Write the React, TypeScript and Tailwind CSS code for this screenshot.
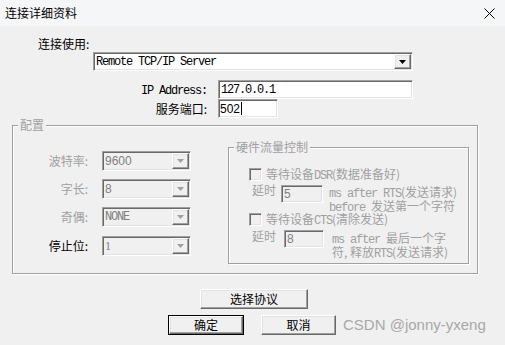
import React from 'react'

const cjk = "font-['Noto_Sans_CJK_SC',sans-serif]"
const mono = "font-['Liberation_Mono','Noto_Sans_CJK_SC',monospace] text-[12px] tracking-[-1.2px]"

// classic win32 3D edges
const sunken =
  'border border-t-[#a0a0a0] border-l-[#a0a0a0] border-r-white border-b-white shadow-[inset_1px_1px_0_#696969,inset_-1px_-1px_0_#e3e3e3]'
const raised =
  'border border-t-white border-l-white border-r-[#696969] border-b-[#696969] shadow-[inset_-1px_-1px_0_#a0a0a0,inset_1px_1px_0_#e3e3e3]'

function Arrow({ disabled }: { disabled?: boolean }) {
  return (
    <svg width="7" height="4" viewBox="0 0 7 4">
      <polygon points="0,0 7,0 3.5,4" fill={disabled ? '#a0a0a0' : '#000'} />
    </svg>
  )
}

function Combo({ w, h, disabled, children }: { w: string; h: string; disabled?: boolean; children: React.ReactNode }) {
  return (
    <div className={`${sunken} ${w} ${h} flex p-[1px] ${disabled ? 'bg-[#f0f0f0]' : 'bg-white'}`}>
      <div className={`flex-1 flex items-center pl-[1px] ${disabled ? 'text-[#808080]' : 'text-black'}`}>{children}</div>
      <div className={`${raised} w-[17px] bg-[#f0f0f0] flex items-center justify-center`}>
        <Arrow disabled={disabled} />
      </div>
    </div>
  )
}

function Check() {
  return <div className={`${sunken} w-[13px] h-[13px] bg-[#f0f0f0] shrink-0`} />
}

function Btn({ w, def, children }: { w: string; def?: boolean; children: React.ReactNode }) {
  const inner = (
    <div className={`${raised} ${def ? 'w-full h-full' : w + ' h-[20px]'} bg-[#f0f0f0] flex items-center justify-center text-[12px] leading-[14px] ${cjk}`}>
      {children}
    </div>
  )
  if (def) return <div className={`${w} h-[20px] border border-black`}>{inner}</div>
  return inner
}

function Group({ title, className, children }: { title: string; className: string; children: React.ReactNode }) {
  return (
    <div className={`relative border border-[#a0a0a0] shadow-[1px_1px_0_#fff,inset_1px_1px_0_#fff] ${className}`}>
      <span className="absolute -top-[8px] left-[5px] px-[2px] bg-[#f0f0f0] text-[#a0a0a0] text-[12px] leading-[14px]">
        {title}
      </span>
      {children}
    </div>
  )
}

export default function App() {
  return (
    <div className={`w-[505px] h-[345px] bg-[#f0f0f0] overflow-hidden flex flex-col text-[12px] leading-[14px] text-black ${cjk}`}>
      {/* Title bar */}
      <div className="h-[26px] bg-[#f5f6f7] flex items-center justify-between pl-[5px] pr-[10px] shrink-0">
        <span className="text-[12px] leading-[14px]">连接详细资料</span>
        <svg width="11" height="11" viewBox="0 0 11 11">
          <path d="M0.5 0.5 L10.5 10.5 M10.5 0.5 L0.5 10.5" stroke="#000" strokeWidth="1" />
        </svg>
      </div>

      {/* Connection */}
      <div className="pl-[38px] mt-[10px] h-[16px] leading-[16px]">连接使用:</div>
      <div className="ml-[93px]">
        <Combo w="w-[320px]" h="h-[19px]">
          <span className={mono}>Remote TCP/IP Server</span>
        </Combo>
      </div>

      <div className="flex items-center mt-[9px] h-[19px]">
        <div className="w-[207px] text-right">
          <span className={mono}>IP Address:</span>
        </div>
        <div className={`${sunken} ml-[11px] w-[195px] h-[19px] bg-white flex items-center pl-[2px]`}>
          <span className={mono + ' tracking-[-0.4px]'}>127.0.0.1</span>
        </div>
      </div>

      <div className="flex items-center h-[19px]">
        <div className="w-[207px] text-right">服务端口:</div>
        <div className={`${sunken} ml-[11px] w-[60px] h-[19px] bg-white flex items-center pl-[1px]`}>
          <span className="font-['Liberation_Sans',sans-serif] text-[12px]">502</span>
          <span className="w-[1px] h-[13px] bg-black ml-[1px]" />
        </div>
      </div>

      {/* 配置 */}
      <Group title="配置" className="ml-[12px] mt-[7px] w-[466px] h-[149px] shrink-0">
        <div className="flex items-start">
          <div className="flex flex-col w-[178px]">
            {[
              { label: '波特率:', value: '9600', mt: 'mt-[25px]', dim: true, f: "font-['Liberation_Sans',sans-serif]" },
              { label: '字长:', value: '8', mt: 'mt-[8px]', dim: true, f: "font-['Liberation_Sans',sans-serif]" },
              { label: '奇偶:', value: 'NONE', mt: 'mt-[8px]', dim: true, f: mono },
              { label: '停止位:', value: '1', mt: 'mt-[9px]', dim: false, f: "font-['Liberation_Serif',serif]" },
            ].map((r) => (
              <div key={r.label} className={`flex items-center ${r.mt}`}>
                <div className={`w-[75px] text-right ${r.dim ? 'text-[#a0a0a0]' : 'text-black'}`}>{r.label}</div>
                <div className="ml-[14px]">
                  <Combo w="w-[89px]" h="h-[20px]" disabled>
                    <span className={r.f}>{r.value}</span>
                  </Combo>
                </div>
              </div>
            ))}
          </div>

          {/* 硬件流量控制 */}
          <Group title="硬件流量控制" className="ml-[37px] mt-[21px] w-[241px] h-[117px]">
            <div className="flex flex-col text-[#a0a0a0]">
              <div className="flex items-center mt-[20px] ml-[20px] h-[13px]">
                <Check />
                <span className="ml-[4px]">
                  等待设备<span className={mono}>DSR</span>(数据准备好)
                </span>
              </div>
              <div className="flex items-start mt-[4px] h-[18px]">
                <span className="ml-[23px] -mt-[2px]">延时</span>
                <div className={`${sunken} ml-[5px] w-[42px] h-[18px] bg-[#f0f0f0] flex items-center pl-[2px] text-[#808080]`}>
                  <span className="font-['Liberation_Sans',sans-serif]">5</span>
                </div>
                <div className="ml-[6px] mt-[1px] leading-[11px]">
                  <div>
                    <span className={mono}>ms after RTS</span>(发送请求)
                  </div>
                  <div>
                    <span className={mono}>before </span>发送第一个字符
                  </div>
                </div>
              </div>
              <div className="flex items-center mt-[10px] ml-[20px] h-[13px]">
                <Check />
                <span className="ml-[4px]">
                  等待设备<span className={mono}>CTS</span>(清除发送)
                </span>
              </div>
              <div className="flex items-start mt-[4px] h-[18px]">
                <span className="ml-[23px] -mt-[1px]">延时</span>
                <div className={`${sunken} ml-[8px] w-[40px] h-[18px] bg-[#f0f0f0] flex items-center pl-[2px] text-[#808080]`}>
                  <span className="font-['Liberation_Sans',sans-serif]">8</span>
                </div>
                <div className="ml-[8px] mt-[2px] leading-[12px]">
                  <div>
                    <span className={mono}>ms after </span>最后一个字
                  </div>
                  <div>
                    符, 释放<span className={mono}>RTS</span>(发送请求)
                  </div>
                </div>
              </div>
            </div>
          </Group>
        </div>
      </Group>

      {/* Buttons */}
      <div className="ml-[200px] mt-[15px]">
        <Btn w="w-[108px]">选择协议</Btn>
      </div>
      <div className="flex items-center mt-[6px]">
        <div className="ml-[168px]">
          <Btn w="w-[76px]" def>
            确定
          </Btn>
        </div>
        <div className="ml-[17px]">
          <Btn w="w-[75px]">取消</Btn>
        </div>
        <span className="ml-[7px] font-['Liberation_Sans',sans-serif] text-[15px] leading-[18px] text-[#a8a8a8]">
          CSDN @jonny-yxeng
        </span>
      </div>
    </div>
  )
}
